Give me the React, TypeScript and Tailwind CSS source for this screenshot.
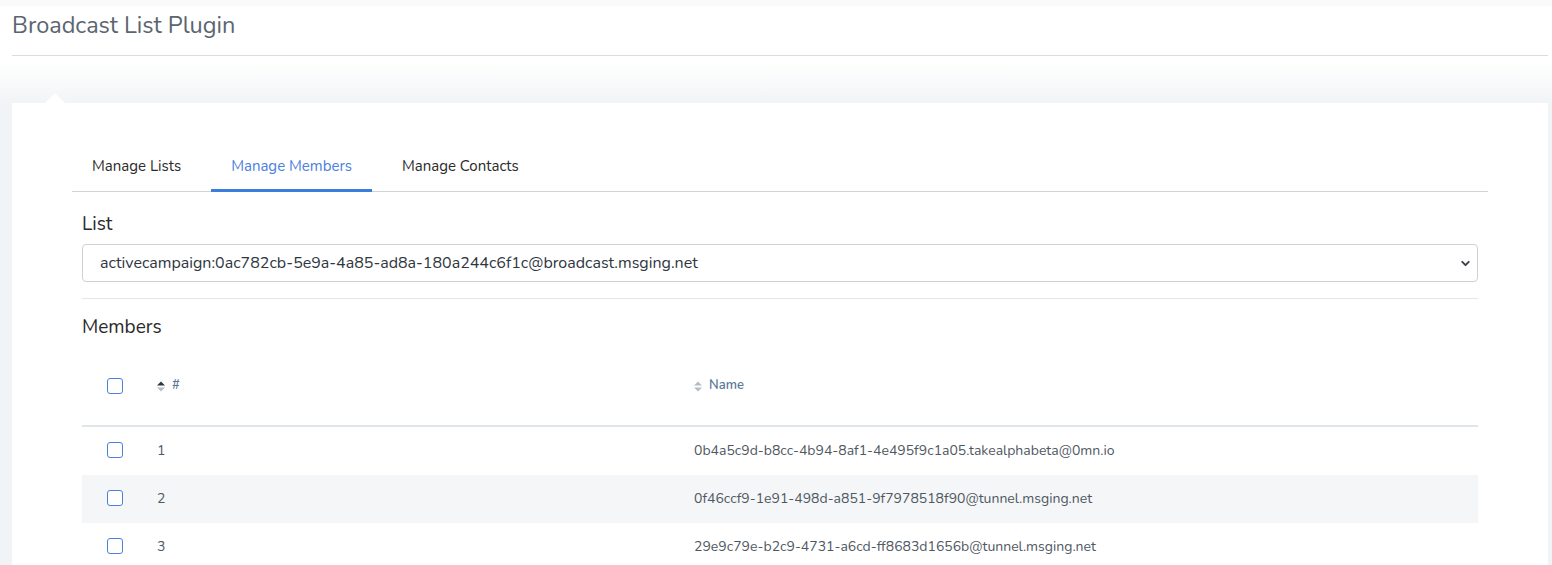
import { ChevronDown } from 'lucide-react';

const members = [
    { id: 1, name: '0b4a5c9d-b8cc-4b94-8af1-4e495f9c1a05.takealphabeta@0mn.io' },
    { id: 2, name: '0f46ccf9-1e91-498d-a851-9f7978518f90@tunnel.msging.net' },
    { id: 3, name: '29e9c79e-b2c9-4731-a6cd-ff8683d1656b@tunnel.msging.net' },
];

const Checkbox = () => (
    <div className="w-[16px] h-[16px] rounded-[3px] border border-[#4a80dc] bg-white" />
);

const SortIcon = ({ active }: { active?: boolean }) => (
    <svg width="8" height="11" viewBox="0 0 8 11" className="shrink-0">
        <path d="M0 4.5 L4 0.5 L8 4.5 Z" fill={active ? '#2f3640' : '#b4bcc6'} />
        <path d="M0 6.5 L4 10.5 L8 6.5 Z" fill="#b4bcc6" />
    </svg>
);

const App = () => {
    const tabs = ['Manage Lists', 'Manage Members', 'Manage Contacts'];

    return (
        <div className="w-[1552px] h-[565px] overflow-hidden bg-white font-['Nunito','Lato',sans-serif]">
            {/* Page header */}
            <div className="h-[6px] bg-[#fafafa]" />
            <div className="pl-[12px] pr-[4px]">
                <div className="h-[50px] border-b border-[#d7dde2] flex items-start">
                    <h1 className="text-[23.5px] leading-[36px] mt-[1px] text-[#5b6570] font-normal">Broadcast List Plugin</h1>
                </div>
            </div>

            {/* Content area */}
            <div className="relative mt-[5px] pt-[42px] pl-[12px] pr-[4px] h-[504px] bg-[linear-gradient(to_bottom,#ffffff_0px,#f1f4f6_43px,#f1f4f6_100%)]">
                {/* Notch */}
                <div className="absolute left-[45px] top-[32px] w-0 h-0 border-l-[10px] border-r-[10px] border-b-[10px] border-l-transparent border-r-transparent border-b-white" />

                <div className="bg-white h-full px-[60px] pt-[41px]">
                    {/* Tabs */}
                    <div className="flex border-b border-[#cfd4d9]">
                        {tabs.map((tab) => {
                            const active = tab === 'Manage Members';
                            return (
                                <div
                                    key={tab}
                                    className={`px-[20px] mr-[10px] h-[48px] pb-[1px] flex items-center text-[15px] -mb-px border-b-[3px] ${
                                        active ? 'text-[#4a80e0] border-[#3b7ddd]' : 'text-[#2a2a2a] border-transparent'
                                    }`}
                                >
                                    {tab}
                                </div>
                            );
                        })}
                    </div>

                    <div className="px-[10px]">
                        {/* List select */}
                        <div className="mt-[20px] text-[19px] leading-[24px] text-[#2a2a2a]">List</div>
                        <div className="mt-[8px] h-[38px] border border-[#cdd2d7] rounded-[4px] flex items-center pl-[17px] pr-[5px]">
                            <span className="text-[16px] text-[#2f3640] flex-1">
                                activecampaign:0ac782cb-5e9a-4a85-ad8a-180a244c6f1c@broadcast.msging.net
                            </span>
                            <ChevronDown className="w-[13px] h-[13px] text-[#3a4048]" strokeWidth={3.5} />
                        </div>
                        <div className="mt-[16px] border-t border-[#e3e7ea]" />

                        {/* Members */}
                        <div className="mt-[16px] text-[19px] leading-[24px] text-[#2a2a2a]">Members</div>

                        <div className="mt-[10px]">
                            <div className="h-[78px] pb-[2px] flex items-center border-b-2 border-[#dee6ea] text-[13px] font-semibold text-[#5b7897]">
                                <div className="w-[75px] pl-[25px]"><Checkbox /></div>
                                <div className="w-[537px] flex items-center gap-[7px]">
                                    <SortIcon active />
                                    <span>#</span>
                                </div>
                                <div className="flex items-center gap-[7px]">
                                    <SortIcon />
                                    <span>Name</span>
                                </div>
                            </div>
                            {members.map((m, i) => (
                                <div
                                    key={m.id}
                                    className={`h-[48px] pb-[2px] flex items-center text-[14px] text-[#4f5862] ${i % 2 === 1 ? 'bg-[#f4f6f8]' : 'bg-white'}`}
                                >
                                    <div className="w-[75px] pl-[25px]"><Checkbox /></div>
                                    <div className="w-[537px]">{m.id}</div>
                                    <div>{m.name}</div>
                                </div>
                            ))}
                        </div>
                    </div>
                </div>
            </div>
        </div>
    );
};

export default App;
